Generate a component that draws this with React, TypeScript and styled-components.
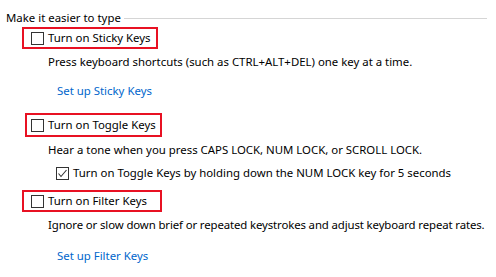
import React from "react";
import styled, { createGlobalStyle } from "styled-components";

const Global = createGlobalStyle`
  html, body { margin: 0; padding: 0; background: #ffffff; }
  body { font-family: "Noto Sans", "Open Sans", sans-serif; font-size: 11.4px; color: #000; }
`;

const Page = styled.div`
  width: 496px;
  height: 277px;
  padding: 10px 0 0 6px;
  box-sizing: border-box;
  overflow: hidden;
`;

const GroupHeader = styled.div`
  display: flex;
  align-items: center;
  gap: 3px;
  height: 16px;
  line-height: 16px;
  padding-right: 9px;
  white-space: nowrap;
`;

const HeaderRule = styled.div`
  flex: 1;
  height: 1px;
  background: #d5d5d5;
`;

const Highlight = styled.div<{ $top: number; $left: number; $width: number; $height: number; $pad: number }>`
  display: flex;
  align-items: center;
  gap: 4px;
  box-sizing: border-box;
  margin-top: ${(p) => p.$top}px;
  margin-left: ${(p) => p.$left}px;
  width: ${(p) => p.$width}px;
  height: ${(p) => p.$height}px;
  padding-left: ${(p) => p.$pad}px;
  border: 2px solid #e81123;
  line-height: 16px;
  white-space: nowrap;
`;

const Box = styled.span`
  display: inline-flex;
  align-items: center;
  justify-content: center;
  width: 13px;
  height: 13px;
  box-sizing: border-box;
  border: 1px solid #333333;
  background: #ffffff;
  flex: none;
`;

const Label = styled.span`
  flex: none;
  white-space: nowrap;
`;

const Line = styled.div<{ $top: number; $left: number; $tight?: boolean }>`
  margin-top: ${(p) => p.$top}px;
  margin-left: ${(p) => p.$left}px;
  line-height: 16px;
  white-space: nowrap;
  letter-spacing: ${(p) => (p.$tight ? "-0.12px" : "normal")};
`;

const Link = styled.a`
  display: block;
  color: #0066cc;
  text-decoration: none;
  line-height: 16px;
  margin-left: 51px;
  cursor: pointer;
`;

const LinkWrap = styled.div<{ $top: number }>`
  margin-top: ${(p) => p.$top}px;
`;

const CheckRow = styled.div<{ $top: number }>`
  display: flex;
  align-items: center;
  gap: 4px;
  margin-top: ${(p) => p.$top}px;
  margin-left: 50px;
  line-height: 16px;
  white-space: nowrap;
`;

const Check = () => (
  <svg width="11" height="11" viewBox="0 0 11 11">
    <path d="M1.5 5.5 L4 8.5 L9.5 2" fill="none" stroke="#333" strokeWidth="1.1" />
  </svg>
);

export default function App() {
  return (
    <Page>
      <Global />
      <GroupHeader>
        <span>Make it easier to type</span>
        <HeaderRule />
      </GroupHeader>

      <Highlight $top={1} $left={16} $width={136} $height={22} $pad={7}>
        <Box />
        <Label>Turn on Sticky Keys</Label>
      </Highlight>
      <Line $top={5} $left={42}>
        Press keyboard shortcuts (such as CTRL+ALT+DEL) one key at a time.
      </Line>
      <LinkWrap $top={13}>
        <Link>Set up Sticky Keys</Link>
      </LinkWrap>

      <Highlight $top={14} $left={19} $width={137} $height={24} $pad={4}>
        <Box />
        <Label>Turn on Toggle Keys</Label>
      </Highlight>
      <Line $top={5} $left={42}>
        Hear a tone when you press CAPS LOCK, NUM LOCK, or SCROLL LOCK.
      </Line>
      <CheckRow $top={7}>
        <Box>
          <Check />
        </Box>
        <Label>Turn on Toggle Keys by holding down the NUM LOCK key for 5 seconds</Label>
      </CheckRow>

      <Highlight $top={9} $left={16} $width={140} $height={22} $pad={7}>
        <Box />
        <Label>Turn on Filter Keys</Label>
      </Highlight>
      <Line $top={5} $left={42} $tight>
        Ignore or slow down brief or repeated keystrokes and adjust keyboard repeat rates.
      </Line>
      <LinkWrap $top={15}>
        <Link>Set up Filter Keys</Link>
      </LinkWrap>
    </Page>
  );
}
